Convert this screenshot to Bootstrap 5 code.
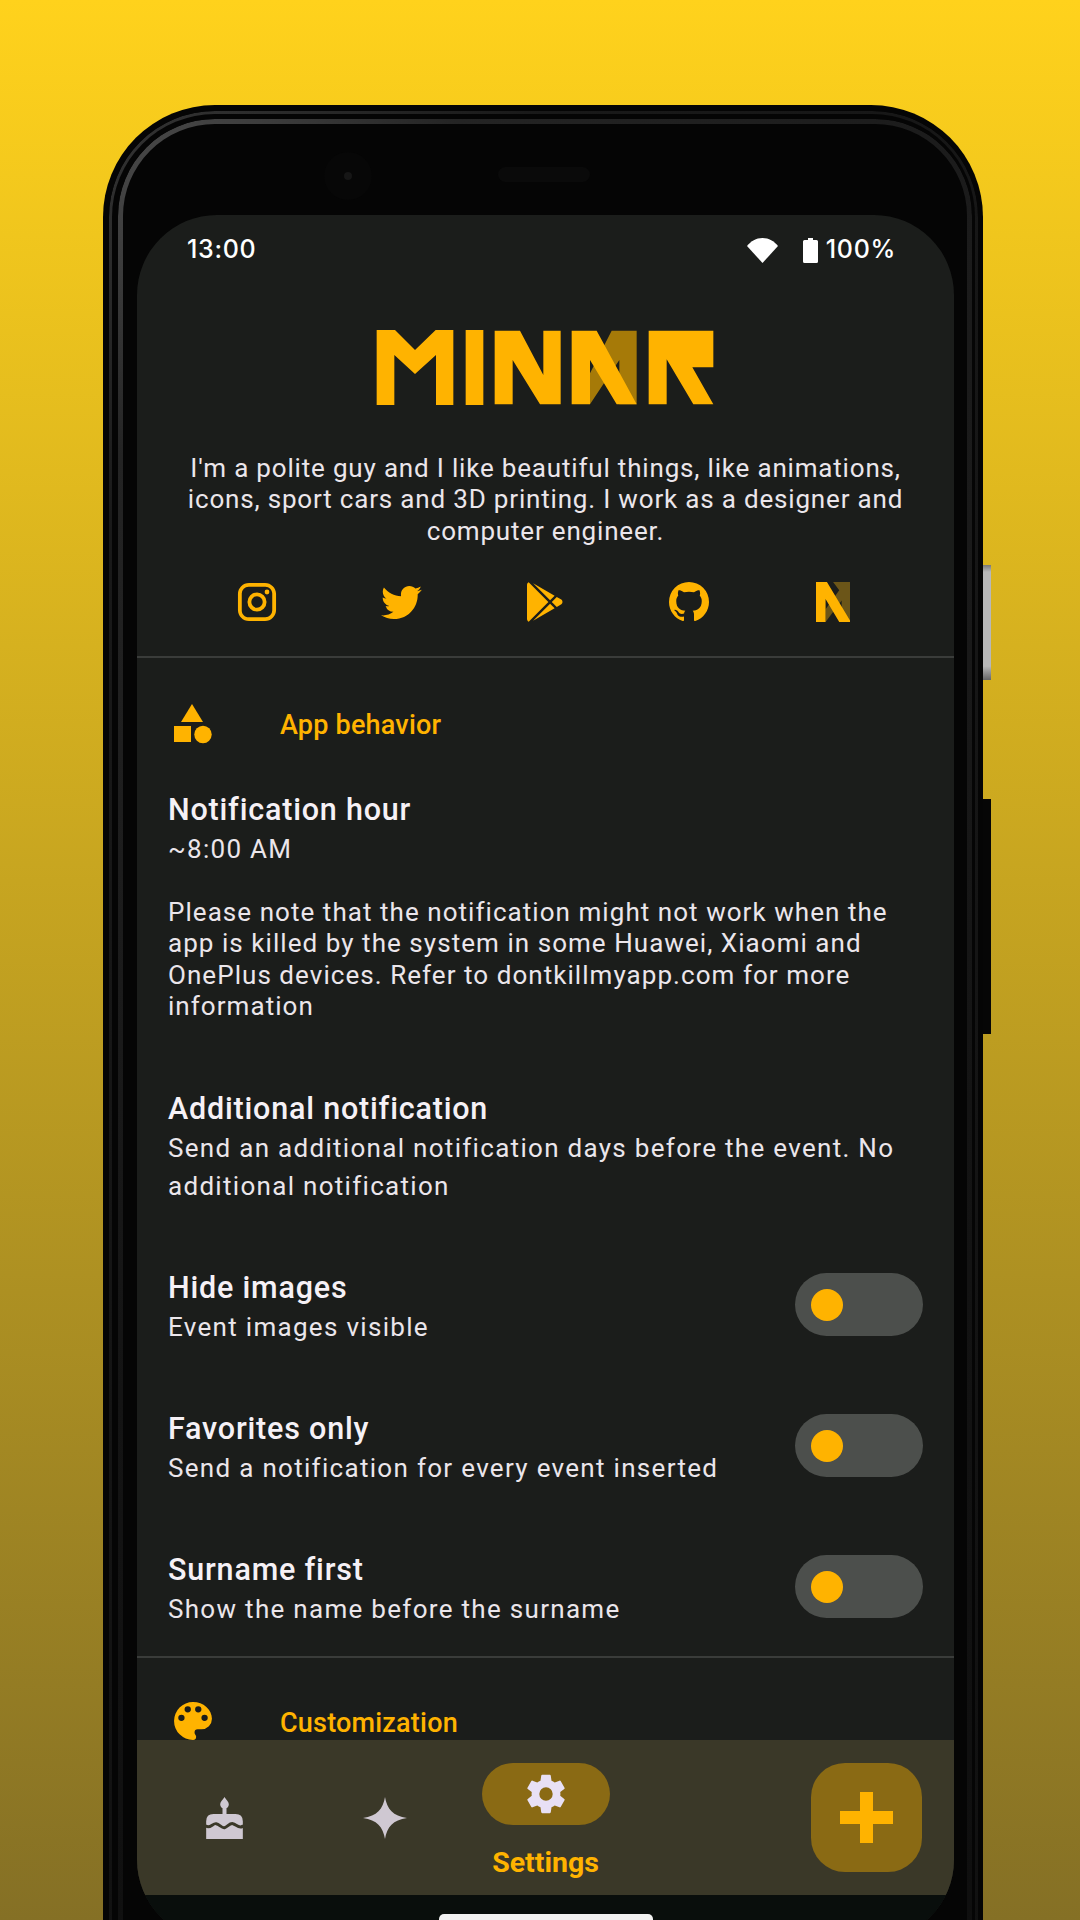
<!DOCTYPE html>
<html lang="en">
  <head>
    <meta charset="UTF-8" />
    <meta name="viewport" content="width=device-width, initial-scale=1.0" />
    <title>Settings</title>
    <link href="https://cdn.jsdelivr.net/npm/bootstrap@5.3.0/dist/css/bootstrap.min.css" rel="stylesheet" />
    <style>
      html, body { height: 1920px; overflow: hidden; }
      body { background: linear-gradient(180deg, #ffd21c 0%, #857025 100%); font-family: Roboto, sans-serif; color: #ebe6eb; }
      .device { position: relative; width: 880px; height: 1900px; margin: 105px 0 0 103px; padding: 110px 29px 0 34px; background: #050505; border-radius: 112px 112px 0 0; }
      .device::before, .device::after { content: ""; position: absolute; -webkit-mask: linear-gradient(#000 0 0) content-box, linear-gradient(#000 0 0); -webkit-mask-composite: xor; mask-composite: exclude; }
      .device::before { inset: 6px 5px -40px 6px; padding: 3px; border-radius: 106px 106px 0 0; background: radial-gradient(circle at 8% 3%, #333 0, #191919 18%, #101010 100%); }
      .device::after { inset: 14px 11px -40px 15px; padding: 5px; border-radius: 97px 97px 0 0; background: radial-gradient(circle at 7% 3%, #4a4a4a 0, #242424 14%, #141414 60%, #0e0e0e 100%); }
      .side-key { position: absolute; left: 880px; width: 8px; }
      .key-silver { top: 460px; height: 115px; background: linear-gradient(180deg, #777 0, #b8b8b8 6%, #b8b8b8 88%, #666 100%); }
      .key-dark { top: 694px; height: 235px; background: #060606; }
      .front-cam { position: absolute; left: 221px; top: 47px; width: 48px; height: 48px; border-radius: 50%; background: #070707; z-index: 1; }
      .front-cam::after { content: ""; position: absolute; inset: 20px; border-radius: 50%; background: #161616; }
      .earpiece { position: absolute; left: 395px; top: 62px; width: 92px; height: 15px; border-radius: 8px; background: #0a0a0a; z-index: 1; }
      .screen { position: relative; z-index: 1; height: 1725px; background: #1b1d1b; border-radius: 80px; overflow: hidden; }
      .status-row { height: 70px; padding: 0 58px 0 50px; font-family: Inter, sans-serif; font-size: 25px; font-weight: 500; letter-spacing: .7px; color: #fff; flex: none; }
      .wifi-ico { width: 31px; height: 25px; margin-right: 25px; }
      .batt-ico { width: 15px; height: 25px; margin-right: 8px; }
      .scroll-area { min-height: 0; margin-top: -2px; }
      .app-logo { display: block; width: 400px; height: 130px; margin: 17px 0 -13px 203px; }
      .about-text { margin: 36px 0 0; font-size: 26px; line-height: 31.3px; letter-spacing: .82px; }
      .social-row { margin: 35px 49px 0 48px; height: 40px; }
      .social-row svg { display: block; height: 40px; margin: 0 auto; }
      .rule-line { height: 2px; background: #3a3c3a; }
      .rule-social { margin-top: 34px; }
      .section-head { height: 40px; margin-top: 46px; padding-left: 37px; color: #ffb300; font-size: 27px; font-weight: 500; letter-spacing: .2px; }
      .section-ico { width: 38px; height: 40px; margin-right: 68px; flex: none; }
      .section-label { padding-top: 3px; }
      .set-row { padding: 0 31px; }
      .set-title { font-size: 30.5px; font-weight: 500; line-height: 39px; letter-spacing: .8px; color: #f6f1f6; }
      .set-sub { margin: 1px 0 -1px; font-size: 26px; line-height: 39px; letter-spacing: 1.3px; }
      .set-note { margin-top: 29px; font-size: 26px; line-height: 31.5px; letter-spacing: 1.05px; }
      .gap-note { margin-top: 66px; }
      .gap-first { margin-top: 46px; }
      .gap-switch { margin-top: 63px; }
      .sub-tall { margin-bottom: -1px; line-height: 38.5px; }
      .pill-switch { width: 128px; height: 63px; margin-bottom: 4px; padding-left: 16px; border-radius: 32px; background: #4c4f4c; flex: none; }
      .pill-thumb { width: 32px; height: 32px; border-radius: 50%; background: #ffb300; }
      .rule-custom { margin-top: 28px; }
      .section-custom { margin-top: 44px; }
      .bottom-nav { height: 155px; padding: 0 32px 0 6px; background: #3a3828; flex: none; }
      .nav-cell { width: 161px; height: 100%; }
      .cake-ico { margin-left: 2px; }
      .nav-pill { width: 128px; height: 62px; margin-top: 23px; border-radius: 31px; background: #8a6a14; }
      .nav-label { margin-top: 21px; font-size: 28.5px; line-height: 34px; font-weight: 700; color: #ffb300; }
      .add-btn { width: 111px; height: 109px; margin-top: 23px; margin-bottom: 23px; border-radius: 34px; background: #8a6a14; }
      .gesture-bar { height: 45px; background: #090e0c; flex: none; }
      .home-pill { width: 214px; height: 10px; margin: 19px auto 0; border-radius: 5px 5px 0 0; background: #f2f2f2; }
    </style>
  </head>
  <body>
    <div class="device">
      <div class="side-key key-silver"></div>
      <div class="side-key key-dark"></div>
      <div class="front-cam"></div>
      <div class="earpiece"></div>

      <div class="screen d-flex flex-column">
        <div class="status-row d-flex align-items-center">
          <span class="me-auto">13:00</span>
          <svg class="wifi-ico" viewBox="0 0 31 25"><path fill="#fff" d="M0 8 15.5 25 31 8C27 3 22 0 15.5 0 9 0 4 3 0 8Z" /></svg>
          <svg class="batt-ico" viewBox="0 0 15 25"><path fill="#fff" d="M5 0h5v2h3.5q1.5 0 1.5 1.5v20q0 1.5-1.5 1.5h-12Q0 25 0 23.5v-20Q0 2 1.5 2H5Z" /></svg>
          <span>100%</span>
        </div>

        <div class="scroll-area flex-grow-1 overflow-hidden">
          <svg class="app-logo" viewBox="0 0 1200 390" role="img" aria-label="Minar logo">
            <polygon fill="#a67a08" points="815,92 890,92 890,313 838,313 838,180 750,313 750,220" />
            <g fill="#ffb300">
              <polygon points="110,90 165,90 225,150 287,90 340,90 340,315 288,315 288,165 225,222 163,165 163,315 110,315" />
              <rect x="377" y="90" width="53" height="225" />
              <polygon points="464,92 540,92 610,225 610,92 662,92 662,313 600,313 518,180 518,313 464,313" />
              <polygon points="695,92 770,92 890,313 830,313 750,180 750,313 695,313" />
              <polygon points="926,92 1120,92 1120,202 1057,202 1120,313 1060,313 980,178 980,313 926,313" />
            </g>
          </svg>

          <p class="about-text text-center">I'm a polite guy and I like beautiful things, like animations,<br />icons, sport cars and 3D printing. I work as a designer and<br />computer engineer.</p>

          <div class="social-row row g-0">
            <div class="col">
              <svg viewBox="1.5 1.5 21 21" fill="#ffb300"><path d="M7.8 2h8.4C19.4 2 22 4.6 22 7.8v8.4a5.8 5.8 0 0 1-5.8 5.8H7.8C4.6 22 2 19.4 2 16.2V7.8A5.8 5.8 0 0 1 7.8 2m-.2 2A3.6 3.6 0 0 0 4 7.6v8.8C4 18.39 5.61 20 7.6 20h8.8a3.6 3.6 0 0 0 3.6-3.6V7.6C20 5.61 18.39 4 16.4 4H7.6m9.65 1.5a1.25 1.25 0 0 1 1.25 1.25A1.25 1.25 0 0 1 17.25 8 1.25 1.25 0 0 1 16 6.75a1.25 1.25 0 0 1 1.25-1.25M12 7a5 5 0 0 1 5 5 5 5 0 0 1-5 5 5 5 0 0 1-5-5 5 5 0 0 1 5-5m0 2a3 3 0 0 0-3 3 3 3 0 0 0 3 3 3 3 0 0 0 3-3 3 3 0 0 0-3-3z" /></svg>
            </div>
            <div class="col">
              <svg viewBox="1 2 22 20.5" fill="#ffb300"><path d="M22.46 6c-.77.35-1.6.58-2.46.69.88-.53 1.56-1.37 1.88-2.38-.83.5-1.75.85-2.72 1.05C18.37 4.5 17.26 4 16 4c-2.35 0-4.27 1.92-4.27 4.29 0 .34.04.67.11.98C8.28 9.09 5.11 7.38 3 4.79c-.37.63-.58 1.37-.58 2.15 0 1.49.75 2.81 1.91 3.56-.71 0-1.37-.2-1.95-.5v.03c0 2.08 1.48 3.82 3.44 4.21a4.22 4.22 0 0 1-1.93.07 4.28 4.28 0 0 0 4 2.98 8.521 8.521 0 0 1-5.33 1.84c-.34 0-.68-.02-1.02-.06C3.44 20.29 5.7 21 8.12 21 16 21 20.33 14.46 20.33 8.79c0-.19 0-.37-.01-.56.84-.6 1.56-1.36 2.14-2.23z" /></svg>
            </div>
            <div class="col">
              <svg viewBox="3 2 18 20" fill="#ffb300"><path d="M3 20.5V3.5C3 2.91 3.34 2.39 3.84 2.15L13.69 12 3.84 21.85C3.34 21.6 3 21.09 3 20.5M16.81 15.12 6.05 21.34 14.54 12.85 16.81 15.12M20.16 10.81C20.5 11.08 20.75 11.5 20.75 12 20.75 12.5 20.53 12.9 20.18 13.18L17.89 14.5 15.39 12 17.89 9.5 20.16 10.81M6.05 2.66 16.81 8.88 14.54 11.15 6.05 2.66Z" /></svg>
            </div>
            <div class="col">
              <svg viewBox="2 2 20 20" fill="#ffb300"><path d="M12 2A10 10 0 0 0 2 12c0 4.42 2.87 8.17 6.84 9.5.5.08.66-.23.66-.5v-1.69c-2.77.6-3.36-1.34-3.36-1.34-.46-1.16-1.11-1.47-1.11-1.47-.91-.62.07-.6.07-.6 1 .07 1.53 1.03 1.53 1.03.87 1.52 2.34 1.07 2.91.83.09-.65.35-1.09.63-1.34-2.22-.25-4.55-1.11-4.55-4.92 0-1.11.38-2 1.03-2.71-.1-.25-.45-1.29.1-2.64 0 0 .84-.27 2.75 1.02.79-.22 1.65-.33 2.5-.33.85 0 1.71.11 2.5.33 1.91-1.29 2.75-1.02 2.75-1.02.55 1.35.2 2.39.1 2.64.65.71 1.03 1.6 1.03 2.71 0 3.82-2.34 4.66-4.57 4.91.36.31.69.92.69 1.85V21c0 .27.16.59.67.5C19.14 20.16 22 16.42 22 12A10 10 0 0 0 12 2z" /></svg>
            </div>
            <div class="col">
              <svg viewBox="50 38 102 117">
                <polygon fill="#6b5518" points="100,38 152,38 152,155 125,155 125,92 78,155 78,118 118,62" />
                <polygon fill="#ffb300" points="50,38 82,38 152,155 118,155 78,88 78,155 50,155" />
              </svg>
            </div>
          </div>

          <div class="rule-line rule-social"></div>

          <div class="section-head d-flex align-items-center">
            <svg class="section-ico" viewBox="0 0 38 40" fill="#ffb300">
              <polygon points="7,18 29,18 18,0" />
              <rect x="0" y="22" width="17" height="16" />
              <circle cx="29" cy="30.5" r="8.7" />
            </svg>
            <span class="section-label">App behavior</span>
          </div>

          <div class="set-row gap-first">
            <div class="set-title">Notification hour</div>
            <div class="set-sub">~8:00 AM</div>
            <div class="set-note">Please note that the notification might not work when the<br />app is killed by the system in some Huawei, Xiaomi and<br />OnePlus devices. Refer to dontkillmyapp.com for more<br />information</div>
          </div>

          <div class="set-row gap-note">
            <div class="set-title">Additional notification</div>
            <div class="set-sub sub-tall">Send an additional notification days before the event. No<br />additional notification</div>
          </div>

          <div class="set-row gap-switch d-flex align-items-center">
            <div class="flex-grow-1">
              <div class="set-title">Hide images</div>
              <div class="set-sub">Event images visible</div>
            </div>
            <div class="pill-switch d-flex align-items-center"><div class="pill-thumb"></div></div>
          </div>

          <div class="set-row gap-switch d-flex align-items-center">
            <div class="flex-grow-1">
              <div class="set-title">Favorites only</div>
              <div class="set-sub">Send a notification for every event inserted</div>
            </div>
            <div class="pill-switch d-flex align-items-center"><div class="pill-thumb"></div></div>
          </div>

          <div class="set-row gap-switch d-flex align-items-center">
            <div class="flex-grow-1">
              <div class="set-title">Surname first</div>
              <div class="set-sub">Show the name before the surname</div>
            </div>
            <div class="pill-switch d-flex align-items-center"><div class="pill-thumb"></div></div>
          </div>

          <div class="rule-line rule-custom"></div>

          <div class="section-head section-custom d-flex align-items-center">
            <svg class="section-ico" viewBox="3 3 18 19" fill="#ffb300"><path d="M17.5 12A1.5 1.5 0 0 1 16 10.5 1.5 1.5 0 0 1 17.5 9 1.5 1.5 0 0 1 19 10.5 1.5 1.5 0 0 1 17.5 12M14.5 8A1.5 1.5 0 0 1 13 6.5 1.5 1.5 0 0 1 14.5 5 1.5 1.5 0 0 1 16 6.5 1.5 1.5 0 0 1 14.5 8M9.5 8A1.5 1.5 0 0 1 8 6.5 1.5 1.5 0 0 1 9.5 5 1.5 1.5 0 0 1 11 6.5 1.5 1.5 0 0 1 9.5 8M6.5 12A1.5 1.5 0 0 1 5 10.5 1.5 1.5 0 0 1 6.5 9 1.5 1.5 0 0 1 8 10.5 1.5 1.5 0 0 1 6.5 12M12 3A9 9 0 0 0 3 12 9 9 0 0 0 12 21 1.5 1.5 0 0 0 13.5 19.5C13.5 19.11 13.35 18.76 13.11 18.5 12.88 18.23 12.73 17.88 12.73 17.5A1.5 1.5 0 0 1 14.23 16H16A5 5 0 0 0 21 11C21 6.58 16.97 3 12 3Z" /></svg>
            <span class="section-label">Customization</span>
          </div>
        </div>

        <div class="bottom-nav d-flex">
          <div class="nav-cell d-flex align-items-center justify-content-center">
            <svg class="cake-ico" width="37" height="42" viewBox="48 44 110 126">
              <path fill="#cfc8d2" d="M103 44C108 52 116 58 116 66A13 13 0 0 1 90 66C90 58 98 52 103 44ZM97 78h12v20H97ZM70 95H136Q158 95 158 117V170H48V117Q48 95 70 95Z" />
              <path fill="none" stroke="#3a3828" stroke-width="9" d="M46 130C58 142 68 122 78 124 88 126 95 138 103 136 112 134 118 122 128 124 138 126 148 142 160 130" />
            </svg>
          </div>
          <div class="nav-cell d-flex align-items-center justify-content-center">
            <svg width="44" height="42" viewBox="0 0 44 42"><path fill="#cfc8d2" d="M22 0C24 12 30 19 44 21 30 23 24 30 22 42 20 30 14 23 0 21 14 19 20 12 22 0Z" /></svg>
          </div>
          <div class="nav-cell d-flex flex-column align-items-center">
            <div class="nav-pill d-flex align-items-center justify-content-center">
              <svg width="46" height="46" viewBox="0 0 24 24"><path fill="#e8e0f5" d="M12 15.5A3.5 3.5 0 0 1 8.5 12 3.5 3.5 0 0 1 12 8.5 3.5 3.5 0 0 1 15.5 12 3.5 3.5 0 0 1 12 15.5M19.43 12.97C19.47 12.65 19.5 12.33 19.5 12 19.5 11.67 19.47 11.34 19.43 11L21.54 9.37C21.73 9.22 21.78 8.95 21.66 8.73L19.66 5.27C19.54 5.05 19.27 4.96 19.05 5.05L16.56 6.05C16.04 5.66 15.5 5.32 14.87 5.07L14.5 2.42C14.46 2.18 14.25 2 14 2H10C9.75 2 9.54 2.18 9.5 2.42L9.13 5.07C8.5 5.32 7.96 5.66 7.44 6.05L4.95 5.05C4.73 4.96 4.46 5.05 4.34 5.27L2.34 8.73C2.21 8.95 2.27 9.22 2.46 9.37L4.57 11C4.53 11.34 4.5 11.67 4.5 12 4.5 12.33 4.53 12.65 4.57 12.97L2.46 14.63C2.27 14.78 2.21 15.05 2.34 15.27L4.34 18.73C4.46 18.95 4.73 19.03 4.95 18.95L7.44 17.94C7.96 18.34 8.5 18.68 9.13 18.93L9.5 21.58C9.54 21.82 9.75 22 10 22H14C14.25 22 14.46 21.82 14.5 21.58L14.87 18.93C15.5 18.67 16.04 18.34 16.56 17.94L19.05 18.95C19.27 19.03 19.54 18.95 19.66 18.73L21.66 15.27C21.78 15.05 21.73 14.78 21.54 14.63L19.43 12.97Z" /></svg>
            </div>
            <div class="nav-label">Settings</div>
          </div>
          <div class="add-btn ms-auto d-flex align-items-center justify-content-center">
            <svg width="53" height="51" viewBox="0 0 53 51"><path fill="#ffb300" d="M20 0h13v19h20v13H33v19H20V32H0V19h20Z" /></svg>
          </div>
        </div>

        <div class="gesture-bar"><div class="home-pill"></div></div>
      </div>
    </div>

    <script src="https://cdn.jsdelivr.net/npm/bootstrap@5.3.0/dist/js/bootstrap.bundle.min.js"></script>
  </body>
</html>
